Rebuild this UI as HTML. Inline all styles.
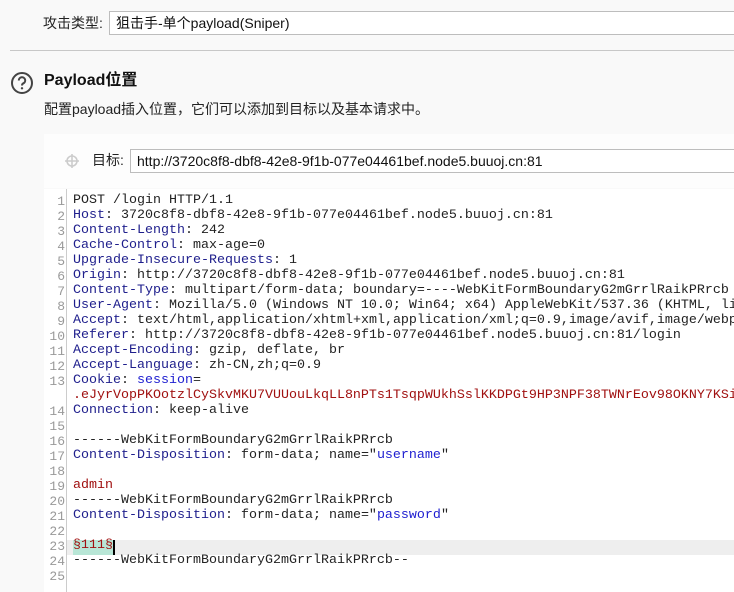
<!DOCTYPE html>
<html><head><meta charset="utf-8"><style>
*{margin:0;padding:0;box-sizing:border-box}
html,body{overflow:hidden}
body{width:734px;height:592px;background:#f9f9f9;font-family:"Liberation Sans","Noto Sans CJK SC",sans-serif;color:#222;position:relative;overflow:hidden;font-size:13px}
.abs{position:absolute}
.inp{position:absolute;background:#fff;border:1px solid #bdbdbd;border-right:none;height:24px;line-height:22px;padding-left:6px;font-size:14px;color:#111;white-space:nowrap;overflow:hidden}
.code{position:absolute;left:44px;top:189px;width:690px;height:403px;background:#fff;overflow:hidden}
.gut{position:absolute;left:0;top:0;width:23px;height:403px;border-right:1px solid #ccc;background:#fff}
.ln{position:absolute;left:0;width:21px;text-align:right;font-family:"Liberation Mono",monospace;font-size:13px;color:#999;line-height:15px}
.tx{position:absolute;left:29px;font-family:"Liberation Mono",monospace;font-size:13.33px;line-height:15px;white-space:pre;color:#222}
.k{color:#1e1e8c}.r{color:#a01010}.b{color:#1e1ed0}
</style></head><body>
<div class="abs" style="left:43px;top:13px;font-size:14px;line-height:20px">攻击类型:</div>
<div class="inp" style="left:109px;top:11px;width:625px">狙击手-单个payload(Sniper)</div>
<div class="abs" style="left:10px;top:50px;width:724px;height:1px;background:#c8c8c8"></div>
<svg class="abs" style="left:10px;top:71px" width="24" height="24" viewBox="0 0 24 24"><circle cx="12" cy="12" r="10" fill="none" stroke="#444" stroke-width="2"/><path d="M8.8 9.5a3.2 3.2 0 1 1 4.6 2.8c-1 .5-1.4 1.1-1.4 2.2" fill="none" stroke="#444" stroke-width="2"/><circle cx="12" cy="17.3" r="1.2" fill="#444"/></svg>
<div class="abs" style="left:44px;top:71px;font-size:16px;font-weight:bold;line-height:20px;color:#111">Payload位置</div>
<div class="abs" style="left:44px;top:100px;font-size:14px;line-height:18px">配置payload插入位置，它们可以添加到目标以及基本请求中。</div>
<div class="abs" style="left:44px;top:134px;width:690px;height:54px;background:#fdfdfd"></div>
<svg class="abs" style="left:64px;top:153px" width="16" height="16" viewBox="0 0 16 16"><circle cx="8" cy="8" r="5" fill="none" stroke="#ccc" stroke-width="1.6"/><path d="M8 1v14M1 8h14" stroke="#ccc" stroke-width="1.6"/></svg>
<div class="abs" style="left:92px;top:150px;font-size:14px;line-height:20px">目标:</div>
<div class="inp" style="left:130px;top:149px;width:604px">http://3720c8f8-dbf8-42e8-9f1b-077e04461bef.node5.buuoj.cn:81</div>
<div class="code">
<div class="abs" style="left:0;top:351px;width:690px;height:15px;background:#eeeeee"></div>
<div class="abs" style="left:29px;top:351px;width:40px;height:15px;background:#b8e6d6"></div>
<div class="abs" style="left:69px;top:351px;width:2px;height:15px;background:#000"></div>
<div class="gut"></div>
<div class="ln" style="top:5px">1<br>2<br>3<br>4<br>5<br>6<br>7<br>8<br>9<br>10<br>11<br>12<br>13<br><br>14<br>15<br>16<br>17<br>18<br>19<br>20<br>21<br>22<br>23<br>24<br>25</div>
<div class="tx" style="top:4px">POST /login HTTP/1.1
<span class="k">Host</span>: 3720c8f8-dbf8-42e8-9f1b-077e04461bef.node5.buuoj.cn:81
<span class="k">Content-Length</span>: 242
<span class="k">Cache-Control</span>: max-age=0
<span class="k">Upgrade-Insecure-Requests</span>: 1
<span class="k">Origin</span>: http://3720c8f8-dbf8-42e8-9f1b-077e04461bef.node5.buuoj.cn:81
<span class="k">Content-Type</span>: multipart/form-data; boundary=----WebKitFormBoundaryG2mGrrlRaikPRrcb
<span class="k">User-Agent</span>: Mozilla/5.0 (Windows NT 10.0; Win64; x64) AppleWebKit/537.36 (KHTML, li
<span class="k">Accept</span>: text/html,application/xhtml+xml,application/xml;q=0.9,image/avif,image/webp
<span class="k">Referer</span>: http://3720c8f8-dbf8-42e8-9f1b-077e04461bef.node5.buuoj.cn:81/login
<span class="k">Accept-Encoding</span>: gzip, deflate, br
<span class="k">Accept-Language</span>: zh-CN,zh;q=0.9
<span class="k">Cookie</span>: <span class="b">session</span>=
<span class="r">.eJyrVopPKOotzlCySkvMKU7VUUouLkqLL8nPTs1TsqpWUkhSslKKDPGt9HP3NPF38TWNrEov98OKNY7KSi</span>
<span class="k">Connection</span>: keep-alive

------WebKitFormBoundaryG2mGrrlRaikPRrcb
<span class="k">Content-Disposition</span>: form-data; name="<span class="b">username</span>"

<span class="r">admin</span>
------WebKitFormBoundaryG2mGrrlRaikPRrcb
<span class="k">Content-Disposition</span>: form-data; name="<span class="b">password</span>"

<span class="r">§111§</span>
------WebKitFormBoundaryG2mGrrlRaikPRrcb--
</div>
</div>
</body></html>
